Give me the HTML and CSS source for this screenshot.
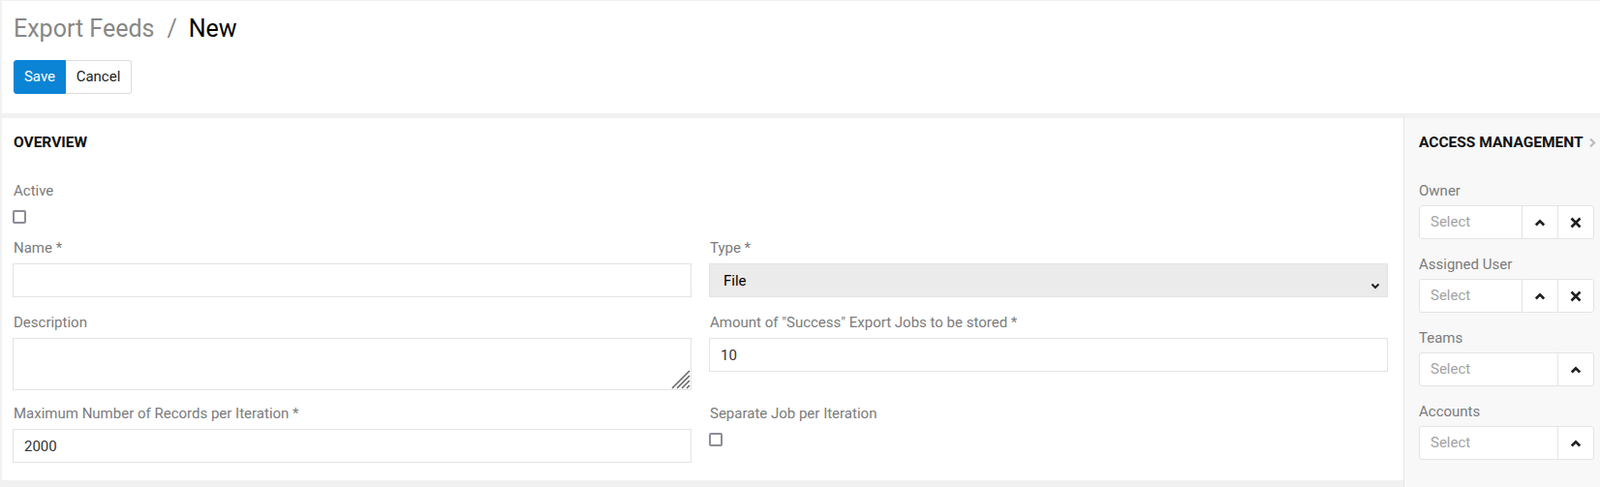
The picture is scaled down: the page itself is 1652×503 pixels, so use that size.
FILE: index.html
```html
<!DOCTYPE html>
<html lang="en">
<head>
<meta charset="utf-8">
<title>Export Feeds / New</title>
<link rel="stylesheet" href="styles.css">
</head>
<body>
<div class="page">
  <header class="header">
    <h1 class="title"><span class="crumb">Export Feeds</span><span class="sep">/</span><span class="current">New</span></h1>
    <div class="btn-group">
      <button class="btn btn-primary" type="button">Save</button>
      <button class="btn btn-default" type="button">Cancel</button>
    </div>
  </header>

  <div class="content">
    <section class="main">
      <h4 class="panel-title">OVERVIEW</h4>

      <div class="field field-active">
        <label class="label">Active</label>
        <div class="check-wrap"><span class="check"></span></div>
      </div>

      <div class="grid row-a">
        <div class="field">
          <label class="label">Name *</label>
          <input class="input" type="text">
        </div>
        <div class="field">
          <label class="label">Type *</label>
          <div class="select-wrap">
            <select class="select"><option>File</option></select>
            <svg class="select-arrow" width="10" height="7" viewBox="0 0 10 7"><path d="M1.5 1.5 L5 5 L8.5 1.5" fill="none" stroke="#222" stroke-width="2"/></svg>
          </div>
        </div>
      </div>

      <div class="grid row-b">
        <div class="field">
          <label class="label">Description</label>
          <div class="textarea-wrap">
            <textarea class="textarea"></textarea>
            <svg class="grip" width="22" height="22" viewBox="0 0 22 22"><g stroke="#666" stroke-width="1.6"><path d="M3 21 L21 3"/><path d="M8 21 L21 8"/><path d="M13 21 L21 13"/><path d="M18 21 L21 18"/></g></svg>
          </div>
        </div>
        <div class="field">
          <label class="label">Amount of "Success" Export Jobs to be stored *</label>
          <input class="input" type="text" value="10">
        </div>
      </div>

      <div class="grid row-c">
        <div class="field">
          <label class="label">Maximum Number of Records per Iteration *</label>
          <input class="input" type="text" value="2000">
        </div>
        <div class="field">
          <label class="label">Separate Job per Iteration</label>
          <div class="check-wrap"><span class="check"></span></div>
        </div>
      </div>
    </section>

    <aside class="side">
      <h4 class="panel-title side-title">ACCESS MANAGEMENT
        <svg class="side-chevron" width="8" height="11" viewBox="0 0 8 11"><path d="M2 1.5 L6 5.5 L2 9.5" fill="none" stroke="#bdbdbd" stroke-width="2.4"/></svg>
      </h4>

      <div class="side-field">
        <label class="label">Owner</label>
        <div class="link-group">
          <span class="link-input">Select</span>
          <span class="link-btn"><svg width="12" height="8" viewBox="0 0 12 8"><path d="M1.8 6.5 L6 2.3 L10.2 6.5" fill="none" stroke="#1f1f1f" stroke-width="2.6"/></svg></span>
          <span class="link-btn"><svg width="12" height="12" viewBox="0 0 12 12"><path d="M1.5 1.5 L10.5 10.5 M10.5 1.5 L1.5 10.5" fill="none" stroke="#1f1f1f" stroke-width="2.6"/></svg></span>
        </div>
      </div>

      <div class="side-field">
        <label class="label">Assigned User</label>
        <div class="link-group">
          <span class="link-input">Select</span>
          <span class="link-btn"><svg width="12" height="8" viewBox="0 0 12 8"><path d="M1.8 6.5 L6 2.3 L10.2 6.5" fill="none" stroke="#1f1f1f" stroke-width="2.6"/></svg></span>
          <span class="link-btn"><svg width="12" height="12" viewBox="0 0 12 12"><path d="M1.5 1.5 L10.5 10.5 M10.5 1.5 L1.5 10.5" fill="none" stroke="#1f1f1f" stroke-width="2.6"/></svg></span>
        </div>
      </div>

      <div class="side-field">
        <label class="label">Teams</label>
        <div class="link-group">
          <span class="link-input">Select</span>
          <span class="link-btn"><svg width="12" height="8" viewBox="0 0 12 8"><path d="M1.8 6.5 L6 2.3 L10.2 6.5" fill="none" stroke="#1f1f1f" stroke-width="2.6"/></svg></span>
        </div>
      </div>

      <div class="side-field">
        <label class="label">Accounts</label>
        <div class="link-group">
          <span class="link-input">Select</span>
          <span class="link-btn"><svg width="12" height="8" viewBox="0 0 12 8"><path d="M1.8 6.5 L6 2.3 L10.2 6.5" fill="none" stroke="#1f1f1f" stroke-width="2.6"/></svg></span>
        </div>
      </div>
    </aside>
  </div>
</div>
</body>
</html>
```

FILE: styles.css
```css
* { box-sizing: border-box; }

html, body {
  margin: 0;
  padding: 0;
  height: 100%;
}

body {
  background: #f1f1f1;
  font-family: Roboto, "Liberation Sans", Arial, sans-serif;
  font-size: 15px;
  color: #333;
  overflow: hidden;
}

.page {
  margin: 1px 0 0 2px;
  display: flex;
  flex-direction: column;
  height: calc(100% - 1px);
}

/* Header */
.header {
  background: #fff;
  padding: 14px 12px 20px;
}

.title {
  margin: 0;
  font-size: 25px;
  font-weight: 400;
  line-height: 30px;
  color: #000;
}

.crumb { color: #878787; }
.sep { color: #8a8a8a; margin: 0 12px 0 13px; }
.current { color: #000; }

.btn-group {
  display: flex;
  margin-top: 17px;
}

.btn {
  font-family: inherit;
  font-size: 15px;
  height: 35px;
  line-height: 33px;
  padding: 0;
  border: 1px solid #dcdcdc;
  cursor: pointer;
  text-align: center;
}

.btn-primary {
  background: #0b84d6;
  border-color: #0b84d6;
  color: #fff;
  border-radius: 3px 0 0 3px;
  width: 54px;
}

.btn-default {
  background: #fff;
  color: #222;
  border-left: 0;
  border-radius: 0 3px 3px 0;
  width: 68px;
}

/* Content */
.content {
  display: flex;
  flex: 1;
  margin-top: 5px;
  align-items: stretch;
}

.main {
  flex: 1;
  align-self: flex-start;
  background: #fff;
  padding: 16px 16px 18px 11px;
}

.panel-title {
  margin: 0 0 31px;
  font-size: 15.5px;
  font-weight: 700;
  line-height: 18px;
  color: #111;
  padding-left: 1px;
}

.label {
  display: block;
  font-size: 15px;
  line-height: 20px;
  color: #7b7b7b;
  padding-left: 1px;
}

.field-active { margin-bottom: 15px; }

.check-wrap {
  padding-top: 10px;
  height: 24px;
}

.check {
  display: block;
  width: 14px;
  height: 14px;
  border: 2px solid #8d8c97;
  border-radius: 2px;
  background: #fff;
}

.grid {
  display: grid;
  grid-template-columns: 1fr 1fr;
  column-gap: 18px;
  align-items: start;
}

.row-a { margin-bottom: 16px; }
.row-b { margin-bottom: 14px; }

.input,
.select,
.textarea {
  display: block;
  width: 100%;
  margin-top: 6px;
  font-family: inherit;
  font-size: 15px;
  color: #333;
  border: 1px solid #e3e3e3;
  border-radius: 0;
  background: #fff;
  outline: none;
}

.input {
  height: 35px;
  padding: 0 11px;
}

.select-wrap,
.textarea-wrap {
  position: relative;
}

.select {
  height: 35px;
  padding: 0 14px;
  background: #ebebeb;
  color: #000;
  -webkit-appearance: none;
  appearance: none;
}

.select-arrow {
  position: absolute;
  right: 8px;
  top: 20px;
}

.textarea {
  height: 54px;
  padding: 8px 11px;
  resize: none;
}

.grip {
  position: absolute;
  right: 1px;
  bottom: 1px;
}

/* Side panel */
.side {
  width: 203px;
  flex: 0 0 203px;
  background: #f8f8f8;
  border-left: 1px solid #e6e6e6;
  padding: 16px 6px 0 15px;
}

.side-title {
  display: flex;
  align-items: center;
  justify-content: space-between;
  white-space: nowrap;
  padding-left: 0;
  margin-right: -2px;
}

.side-chevron { flex: 0 0 auto; margin-top: 1px; }

.side .label { padding-left: 0; }

.side-field { margin-bottom: 16px; }

.link-group {
  display: flex;
  height: 35px;
  margin-top: 5px;
  background: #fff;
  border: 1px solid #e4e4e4;
  border-radius: 3px;
}

.link-input {
  flex: 1;
  line-height: 33px;
  padding-left: 11px;
  color: #a3a3a3;
  font-size: 15px;
}

.link-btn {
  width: 37px;
  display: flex;
  align-items: center;
  justify-content: center;
  border-left: 1px solid #e4e4e4;
}
```
